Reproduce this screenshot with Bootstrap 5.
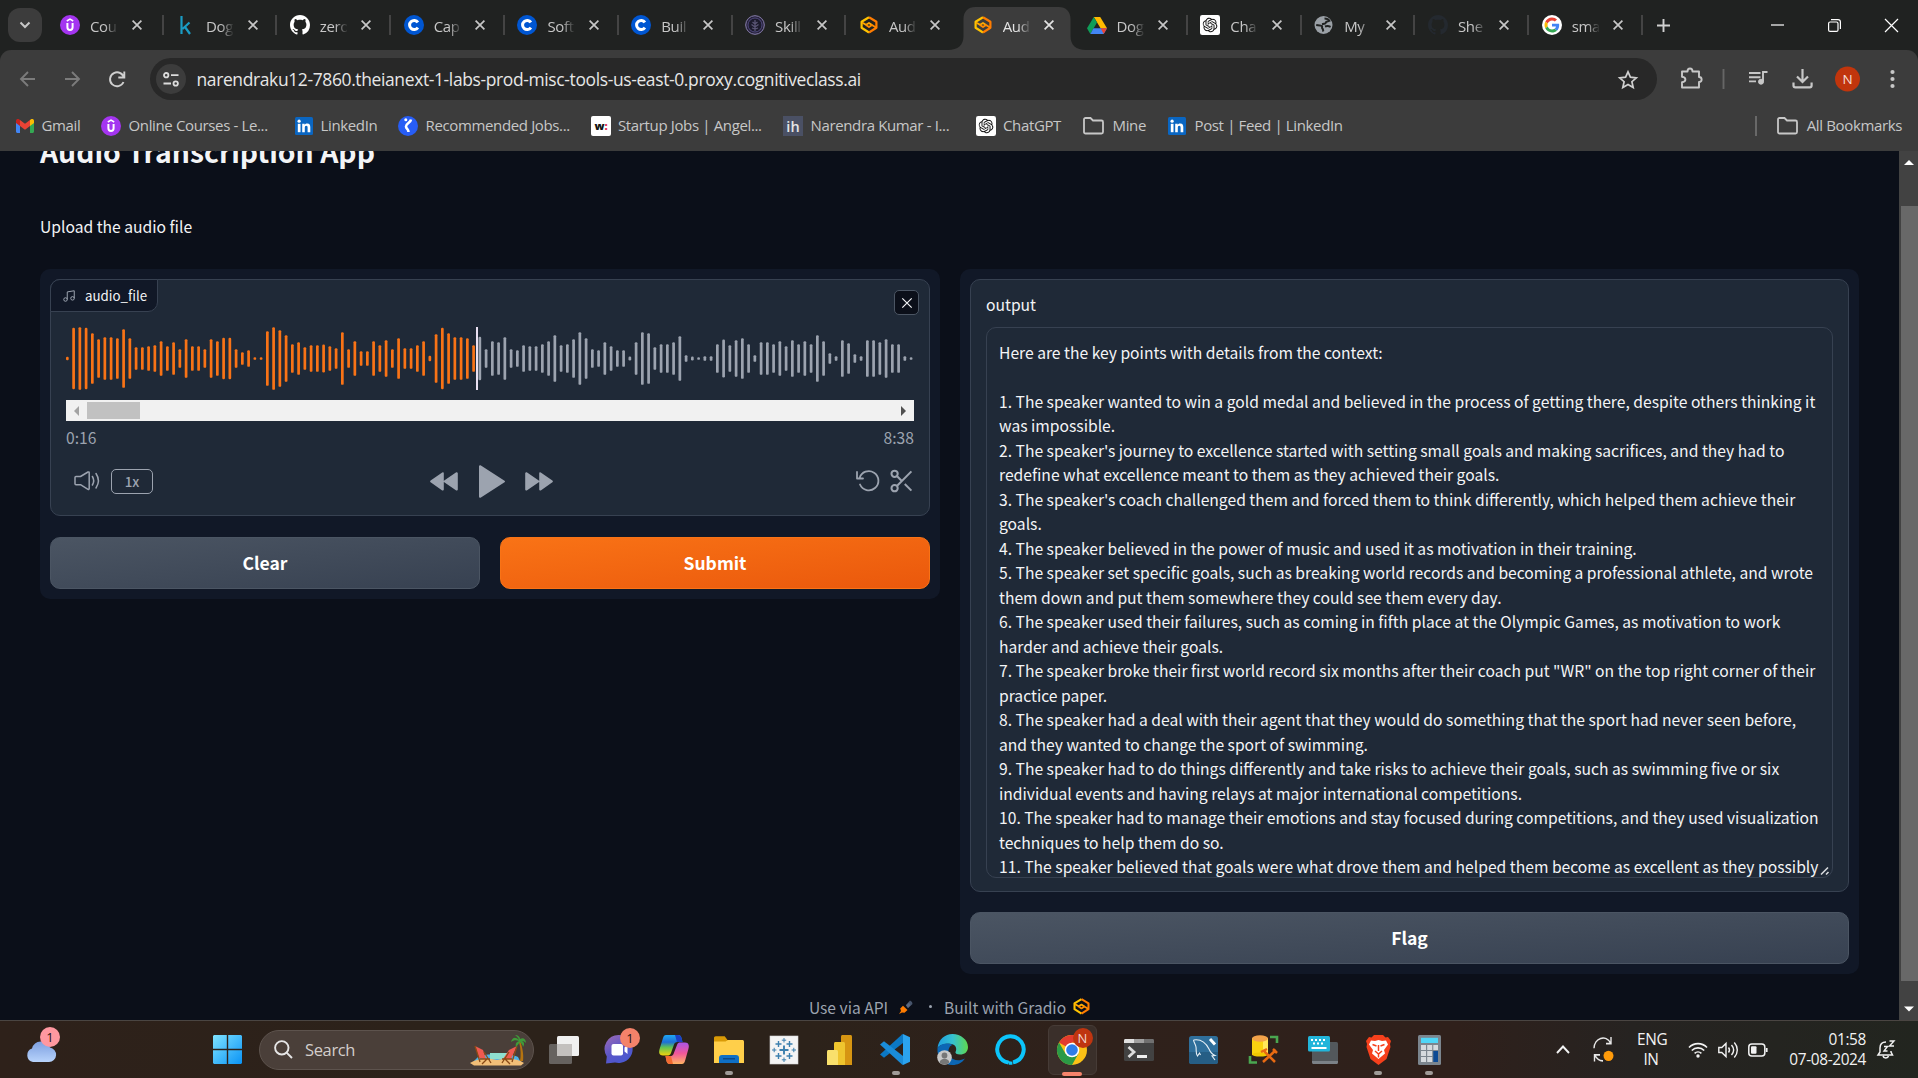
<!DOCTYPE html>
<html lang="en">
<head>
<meta charset="utf-8">
<title>Audio Transcription App</title>
<link href="https://cdn.jsdelivr.net/npm/bootstrap@5.3.0/dist/css/bootstrap.min.css" rel="stylesheet">
<style>
  html, body { height: 100%; }
  body { background: #0b0f19; overflow: hidden; font-family: "Open Sans", "Noto Sans", sans-serif; font-size: 15px; letter-spacing: -.024em; line-height: 20px; }
  svg { display: block; flex: none; overflow: visible; }
  .screen { width: 1918px; height: 1078px; }

  /* tab strip */
  .tabstrip { height: 50px; background: #202221; color: #c7c7c7; padding-left: 8px; }
  .tab-search { width: 34px; height: 34px; border-radius: 12px; background: #3c3c3c; margin: 8px 5.5px 0 0; }
  .btab { width: 113.82px; height: 50px; padding: 0 0 0 12.5px; position: relative; }
  .tab-search + .btab { width: 116px; }
  .btab .cap { width: 27px; margin-left: 10px; overflow: hidden; white-space: nowrap; padding-top: 1px;
    -webkit-mask-image: linear-gradient(90deg, #000 55%, transparent 104%); mask-image: linear-gradient(90deg, #000 55%, transparent 104%); }
  .btab .tx { margin-left: 14.5px; }
  .btab::after { content: ""; position: absolute; right: 0; top: 15px; width: 2px; height: 20px; background: #444; }
  .btab.nosep::after, .btab.current::after { display: none; }
  .btab.current { color: #e3e3e3; isolation: isolate; }
  .btab.current .shape { position: absolute; left: -12.5px; top: 7px; z-index: -1; }
  .winbtn { width: 57px; }

  /* toolbar */
  .chrome-body { background: #3c3c3c; border-radius: 11px 11px 0 0; height: 101px; color: #c7c7c7; }
  .under-tabs { background: #202221; }
  .toolbar { height: 58px; }
  .omni { height: 42px; width: 1507px; border-radius: 21px; background: #282828; padding: 0 19px 0 6px; }
  .siteinfo { width: 30px; height: 30px; border-radius: 50%; background: #3c3c3c; }
  .url { font-size: 17.45px; color: #e6e6e6; margin-left: 10.5px; }
  .bookmarks { height: 35px; padding: 0 16px; white-space: nowrap; }
  .bm { display: flex; align-items: center; width: 192.5px; }
  .bm span { margin: -2px 0 0 7.5px; }
  .bm:nth-child(1) { width: 85px; }
  .bm:nth-child(2) { width: 194px; }
  .bm:nth-child(3) { width: 103px; }
  .bm:nth-child(7) { width: 107px; }
  .bm:nth-child(8) { width: 85px; }
  .bm:nth-child(n+9) { width: auto; }

  /* page */
  .viewport { height: 869px; overflow: hidden; background: #0b0f19; font-family: "Noto Sans CJK SC", "Open Sans", sans-serif; font-size: 15.67px; letter-spacing: 0; color: #f3f4f6; }
  .page { padding: 0 40px; }
  .page h1 { font-size: 28.35px; line-height: 36px; font-weight: 700; margin: -18px 0 0; color: #f3f4f6; }
  .intro { margin-top: 46px; line-height: 24px; }
  .columns { gap: 20px; margin-top: 30px; }
  .panel { background: #111827; border-radius: 10px; padding: 10px; flex: 1 1 0; }
  .block { background: #1f2937; border: 1px solid #374151; border-radius: 10px; position: relative; }
  .audio { height: 237px; padding: 47px 15px 0; }
  .lbl { position: absolute; left: -1px; top: -1px; width: 108px; height: 33px; border: 1px solid #374151; border-radius: 10px 0 10px 0; background: #111827; font-size: 13.3px; line-height: 30px; padding-left: 11px; }
  .xbtn { position: absolute; right: 10px; top: 10px; width: 25px; height: 25px; border: 1px solid #4b5563; border-radius: 5px; background: #0b0f19; }
  .hscroll { height: 21px; background: #f1f1f1; margin-top: 10px; padding: 0 8px; }
  .hthumb { width: 53px; height: 17px; background: #c1c1c1; margin-left: 8px; }
  .times { color: #9ca3af; line-height: 24px; margin-top: 5px; }
  .controls { color: #9ca3af; height: 34px; margin-top: 14px; }
  .speed { width: 42px; height: 25px; border: 1px solid #9ca3af; border-radius: 5px; font-size: 13.4px; font-weight: 500; line-height: 23px; margin-left: 12px; }
  .side { flex: 1 1 0; }
  .gbtn { height: 52px; border-radius: 10px; font-size: 17.54px; font-weight: 700; color: #fff; border: 1px solid #4b5563; background: linear-gradient(to bottom right, #4b5563, #374151); padding: 0; line-height: 50px; flex: 1 1 0; }
  .gbtn.go { border-color: #f97316; background: linear-gradient(to bottom right, #f97316, #ea580c); }
  .out { height: 613px; padding: 13px 15px 0; }
  .outbox { height: 551px; border: 1px solid #374151; border-radius: 10px; margin-top: 10px; padding: 12.5px 0 0 12px; line-height: 24.5px; white-space: pre; overflow: hidden; position: relative; }
  .grip { position: absolute; right: 2px; bottom: 2px; }
  .foot { color: #9ca3af; line-height: 24px; margin-top: 20.5px; font-size: 15.6px; }
  .dot { width: 3px; height: 3px; border-radius: 50%; background: #9ca3af; margin: 0 12px 0 16px; }
  .vscroll { width: 19px; background: #424242; }
  .vthumb { width: 17px; height: 775px; background: #686868; margin-left: 2px; }

  /* taskbar */
  .taskbar { height: 58px; border-top: 1px solid #4a4542; background: linear-gradient(90deg, #2e211a 0, #2c221a 22%, #2c221a 42%, #2f211b 56%, #2f201b 76%, #262321 85%, #22251f 100%); color: #f2f2f2; }
  .wsearch { width: 275px; height: 40px; border-radius: 20px; background: #4a3f39; border: 1px solid #5d534d; font-size: 16.5px; color: #d3cecb; padding: 0 8px 0 14px; }
  .apps > div { width: 32px; margin-left: 23px; position: relative; height: 57px; display: flex; align-items: center; justify-content: center; }
  .apps > div:first-child { margin-left: 14px; }
  .apps > div:nth-child(7) { margin-left: 24.5px; }
  .apps > div:nth-child(8) { margin-left: 24.5px; }
  .apps > div:nth-child(9) { margin-left: 26px; }
  .apps > div:nth-child(10) { margin-left: 29.500px; }
  .apps > div:nth-child(11) { margin-left: 35px; }
  .apps > div:nth-child(12) { margin-left: 33px; }
  .apps > div:nth-child(13) { margin-left: 28.5px; }
  .apps > div:nth-child(14) { margin-left: 26.5px; }
  .apps > div:nth-child(15) { margin-left: 23.5px; }
  .apps > div:nth-child(16) { margin-left: 19px; }
  .apps .open::after { content: ""; position: absolute; left: 12px; bottom: 3px; width: 8px; height: 4px; border-radius: 2px; background: #a09b98; }
  .apps .live::before { content: ""; position: absolute; left: -8px; top: 4px; width: 49px; height: 50px; border-radius: 6px; background: #3a2f2a; border: 1px solid #463b36; }
  .apps .live::after { content: ""; position: absolute; left: 6px; bottom: 2px; width: 20px; height: 4px; border-radius: 2px; background: #f5836b; }
  .apps .live svg { position: relative; }
  .count { position: absolute; width: 20px; height: 20px; border-radius: 50%; font-size: 13px; line-height: 20px; text-align: center; color: #1c1311; letter-spacing: 0; }
  .tray { font-size: 15.4px; line-height: 20px; }
</style>
</head>
<body>
<svg width="0" height="0" class="position-absolute">
  <defs>
    <symbol id="x" viewBox="0 0 10 10"><path d="M.6.6l8.8 8.8M9.4.6L.6 9.4" stroke="currentColor" stroke-width="1.7"/></symbol>
    <symbol id="udemy" viewBox="0 0 20 20"><circle cx="10" cy="10" r="10" fill="#a435f0"/><path d="M6.8 6L10 4.1 13.200 6" fill="none" stroke="#fff" stroke-width="1.5"/><path d="M7.400 8v4.300a2.600 2.600 0 0 0 5.200 0V8" fill="none" stroke="#fff" stroke-width="2"/></symbol>
    <symbol id="github" viewBox="0 0 16 16"><path fill="currentColor" d="M8 0C3.580 0 0 3.580 0 8c0 3.540 2.290 6.530 5.470 7.590.4.070.55-.17.55-.38 0-.19-.01-.82-.01-1.490-2.010.37-2.530-.49-2.690-.94-.09-.23-.48-.94-.82-1.130-.28-.15-.68-.52-.01-.53.63-.01 1.080.58 1.230.82.72 1.210 1.870.87 2.330.66.070-.52.28-.87.51-1.070-1.780-.2-3.640-.89-3.640-3.950 0-.87.31-1.590.82-2.150-.08-.2-.36-1.020.08-2.120 0 0 .67-.21 2.200.82.64-.18 1.320-.27 2-.27.68 0 1.360.09 2 .27 1.530-1.040 2.200-.82 2.200-.82.44 1.100.16 1.920.08 2.120.51.56.82 1.270.82 2.150 0 3.070-1.870 3.750-3.650 3.950.29.25.54.73.54 1.480 0 1.070-.01 1.930-.01 2.200 0 .21.15.46.55.38A8.013 8.013 0 0 0 16 8c0-4.420-3.580-8-8-8z"/></symbol>
    <symbol id="coursera" viewBox="0 0 20 20"><circle cx="10" cy="10" r="10" fill="#0056d2"/><path d="M13.900 7.300A4.600 4.600 0 1 0 13.900 12.700" fill="none" stroke="#fff" stroke-width="3"/></symbol>
    <symbol id="gradio" viewBox="0 0 18 18"><g fill="none" stroke-width="2.200" stroke-linejoin="round"><path d="M9 1.300L1.600 5.800v6L9 16.500" stroke="#ffc400"/><path d="M9 1.300l7.400 4.500v6L9 16.500" stroke="#ff7c00"/><path d="M2 6.500l4 2.300L9 7l3 2" stroke="#ffa800" stroke-width="1.900"/><path d="M16 11.500l-4-2.500-3 2-3-2" stroke="#ff8a00" stroke-width="1.900"/></g></symbol>
    <symbol id="openai" viewBox="-3 -3 22 22"><rect x="-3" y="-3" width="22" height="22" rx="2.500" fill="#fff"/><path fill="#111" d="M14.949 6.547a3.940 3.940 0 0 0-.348-3.273 4.110 4.110 0 0 0-4.400-1.934A4.100 4.100 0 0 0 8.423.2 4.150 4.150 0 0 0 6.305.086a4.100 4.100 0 0 0-1.891.948 4.040 4.040 0 0 0-1.158 1.753 4.100 4.100 0 0 0-1.563.679A4 4 0 0 0 .554 4.720a3.990 3.990 0 0 0 .502 4.731 3.940 3.940 0 0 0 .346 3.274 4.110 4.110 0 0 0 4.402 1.933c.382.425.852.764 1.377.995.526.231 1.095.35 1.670.346 1.780.002 3.358-1.132 3.901-2.804a4.100 4.100 0 0 0 1.563-.68 4 4 0 0 0 1.140-1.253 3.990 3.990 0 0 0-.506-4.716m-6.097 8.406a3.050 3.050 0 0 1-1.945-.694l.096-.054 3.230-1.838a.53.53 0 0 0 .265-.455v-4.490l1.366.778q.020.011.025.035v3.722c-.003 1.653-1.361 2.992-3.037 2.996m-6.530-2.750a2.950 2.950 0 0 1-.36-2.010l.095.057L5.290 12.090a.53.53 0 0 0 .527 0l3.949-2.246v1.555a.05.05 0 0 1-.022.041L6.473 13.300c-1.454.826-3.311.335-4.150-1.098m-.85-6.940A3.020 3.020 0 0 1 3.070 3.949v3.785a.51.51 0 0 0 .262.451l3.930 2.237-1.366.779a.05.05 0 0 1-.048 0L2.585 9.342a2.980 2.980 0 0 1-1.113-4.094zm11.216 2.571L8.747 5.576l1.362-.776a.05.05 0 0 1 .048 0l3.265 1.860a3 3 0 0 1 1.173 1.207 2.960 2.960 0 0 1-.27 3.200 3.050 3.050 0 0 1-1.360.997V8.279a.52.52 0 0 0-.276-.445m1.360-2.015-.097-.057-3.226-1.855a.53.53 0 0 0-.53 0L6.249 6.153V4.598a.04.04 0 0 1 .019-.04L9.533 2.700a3.070 3.070 0 0 1 3.257.139c.474.325.843.778 1.066 1.303.223.526.289 1.103.191 1.664zM5.503 8.575 4.139 7.800a.05.05 0 0 1-.026-.037V4.049c0-.57.166-1.127.476-1.607s.752-.864 1.275-1.105a3.080 3.080 0 0 1 3.234.41l-.096.054-3.230 1.838a.53.53 0 0 0-.265.455zm.742-1.577 1.758-1 1.762 1v2l-1.755 1-1.762-1z"/></symbol>
    <symbol id="linkedin" viewBox="0 0 18 18"><rect width="18" height="18" rx="1.500" fill="#0a66c2"/><g fill="#fff"><circle cx="4.100" cy="4.200" r="1.600"/><rect x="2.800" y="6.800" width="2.700" height="8.400"/><path d="M7.200 6.800h2.500v1.200c.5-.9 1.500-1.400 2.600-1.400 2.300 0 3 1.500 3 3.700v4.900h-2.700v-4.500c0-1.100-.2-1.900-1.300-1.900s-1.500.8-1.500 1.900v4.500H7.200z"/></g></symbol>
    <symbol id="folder" viewBox="0 0 21 18"><path d="M1 2.500C1 1.700 1.700 1 2.500 1h5L10 3.500h8.500c.8 0 1.500.7 1.500 1.500v10c0 .8-.7 1.500-1.500 1.500h-16C1.700 16.500 1 15.800 1 15z" fill="none" stroke="currentColor" stroke-width="1.800"/></symbol>
    <symbol id="chev" viewBox="0 0 12 8"><path d="M1.500 1.500L6 6l4.500-4.500" fill="none" stroke="currentColor" stroke-width="2"/></symbol>
    <symbol id="ff" viewBox="0 0 28 19"><g fill="#9ca3af" stroke="#9ca3af" stroke-width="2" stroke-linejoin="round"><path d="M1.200 1.200v16.400L13.200 9.400zM15.200 1.200v16.400L26.800 9.400z"/></g></symbol>
  </defs>
</svg>

<div class="screen d-flex flex-column">
  <div class="tabstrip d-flex">
    <div class="tab-search d-flex align-items-center justify-content-center"><svg width="12" height="8"><use href="#chev"/></svg></div>
    <div class="btab d-flex align-items-center"><svg width="20" height="20"><use href="#udemy"/></svg><span class="cap">Cou</span><svg class="tx" width="10" height="10"><use href="#x"/></svg></div>
    <div class="btab d-flex align-items-center"><svg width="20" height="20" viewBox="0 0 20 20"><path d="M5.500 1v18M13.500 7.500l-7 6.500M9 12l5 7" fill="none" stroke="#1a9cc4" stroke-width="2.200"/></svg><span class="cap">Dog</span><svg class="tx" width="10" height="10"><use href="#x"/></svg></div>
    <div class="btab d-flex align-items-center"><svg width="20" height="20" class="text-white"><use href="#github"/></svg><span class="cap">zero</span><svg class="tx" width="10" height="10"><use href="#x"/></svg></div>
    <div class="btab d-flex align-items-center"><svg width="20" height="20"><use href="#coursera"/></svg><span class="cap">Cap</span><svg class="tx" width="10" height="10"><use href="#x"/></svg></div>
    <div class="btab d-flex align-items-center"><svg width="20" height="20"><use href="#coursera"/></svg><span class="cap">Soft</span><svg class="tx" width="10" height="10"><use href="#x"/></svg></div>
    <div class="btab d-flex align-items-center"><svg width="20" height="20"><use href="#coursera"/></svg><span class="cap">Buil</span><svg class="tx" width="10" height="10"><use href="#x"/></svg></div>
    <div class="btab d-flex align-items-center"><svg width="20" height="20" viewBox="0 0 20 20"><circle cx="10" cy="10" r="9.300" fill="#26223a" stroke="#8a80b0" stroke-width="1"/><circle cx="10" cy="10" r="7" fill="#1c1b2c" stroke="#5d5490" stroke-width=".8"/><path d="M10 5v11M10 12L6.500 9.500M10 12l3.500-2.500M10 9L7.500 7M10 9l2.500-2M7 13l3 1 3-1" stroke="#5a5575" stroke-width="1.300" fill="none"/></svg><span class="cap">Skill</span><svg class="tx" width="10" height="10"><use href="#x"/></svg></div>
    <div class="btab nosep d-flex align-items-center"><svg width="20" height="18"><use href="#gradio"/></svg><span class="cap">Aud</span><svg class="tx" width="10" height="10"><use href="#x"/></svg></div>
    <div class="btab current d-flex align-items-center"><svg class="shape" width="138" height="43" viewBox="0 0 138 43"><path d="M0 43c10 0 15.500-5 15.500-14V12C15.500 4.500 20 0 27.500 0h83c7.500 0 12 4.500 12 12v17c0 9 5.500 14 15.500 14z" fill="#3c3c3c"/></svg><svg width="20" height="18"><use href="#gradio"/></svg><span class="cap">Aud</span><svg class="tx" width="10" height="10"><use href="#x"/></svg></div>
    <div class="btab d-flex align-items-center"><svg width="20" height="17" viewBox="0 0 20 17"><path d="M6.800 0h6.400L20 11.300h-6.400z" fill="#ffba00"/><path d="M6.800 0L10 5.500 3.300 17 0 11.300z" fill="#0f9d58"/><path d="M6.500 11.300H20L16.700 17H3.300z" fill="#4285f4"/><path d="M13.600 11.300H20L16.700 17z" fill="#ea4335"/></svg><span class="cap">Dog</span><svg class="tx" width="10" height="10"><use href="#x"/></svg></div>
    <div class="btab d-flex align-items-center"><svg width="20" height="20"><use href="#openai"/></svg><span class="cap">Cha</span><svg class="tx" width="10" height="10"><use href="#x"/></svg></div>
    <div class="btab d-flex align-items-center"><svg width="20" height="18" viewBox="0 0 20 18"><circle cx="9.500" cy="9" r="9" fill="#9aa0a6"/><path d="M10.500 2.600c2 0 4 .8 4.800 2.200l-2.800 1c-.8.300-.6 1.500-1.500 1.800L8 8.200M2.200 9c2 .3 5 .2 5.800 1.200.6 1-.6 1.600.4 2.400 1 .6.400 1.800 1 2.800M11 10.500c2-.8 4.500-.2 5.600.3" fill="none" stroke="#202221" stroke-width="2"/></svg><span class="cap">My</span><svg class="tx" width="10" height="10"><use href="#x"/></svg></div>
    <div class="btab d-flex align-items-center"><svg width="20" height="20" color="#24292f"><use href="#github"/></svg><span class="cap">She</span><svg class="tx" width="10" height="10"><use href="#x"/></svg></div>
    <div class="btab d-flex align-items-center"><svg width="20" height="20" viewBox="-8 -8 64 64"><circle cx="24" cy="24" r="32" fill="#fff"/><path fill="#EA4335" d="M24 9.500c3.540 0 6.710 1.220 9.210 3.600l6.850-6.850C35.900 2.380 30.470 0 24 0 14.620 0 6.510 5.380 2.560 13.220l7.980 6.190C12.430 13.720 17.740 9.500 24 9.500z"/><path fill="#4285F4" d="M46.980 24.550c0-1.570-.15-3.090-.38-4.550H24v9.020h12.940c-.58 2.960-2.260 5.480-4.780 7.180l7.730 6c4.510-4.180 7.090-10.360 7.090-17.650z"/><path fill="#FBBC05" d="M10.530 28.590c-.48-1.450-.76-2.990-.76-4.590s.27-3.140.76-4.590l-7.980-6.190C.92 16.460 0 20.120 0 24c0 3.880.92 7.540 2.560 10.780l7.970-6.190z"/><path fill="#34A853" d="M24 48c6.480 0 11.930-2.130 15.890-5.810l-7.730-6c-2.150 1.450-4.920 2.300-8.160 2.300-6.260 0-11.570-4.220-13.470-9.910l-7.980 6.190C6.510 42.620 14.620 48 24 48z"/></svg><span class="cap">sma</span><svg class="tx" width="10" height="10"><use href="#x"/></svg></div>
    <div class="d-flex align-items-center" style="padding-left:14px"><svg width="13" height="13" viewBox="0 0 13 13"><path d="M6.500 0v13M0 6.500h13" stroke="#d0d0d0" stroke-width="1.900"/></svg></div>
    <div class="d-flex align-items-center ms-auto text-white" style="margin-right:-2px">
      <div class="winbtn d-flex justify-content-center"><svg width="13" height="13" viewBox="0 0 13 13"><path d="M0 6h13" stroke="currentColor" stroke-width="1.200"/></svg></div>
      <div class="winbtn d-flex justify-content-center"><svg width="13" height="13" viewBox="0 0 13 13"><rect x=".6" y="3" width="9.400" height="9.400" rx="1.500" fill="none" stroke="currentColor" stroke-width="1.200"/><path d="M3 .6h7c1.500 0 2.400 1 2.400 2.400v7" fill="none" stroke="currentColor" stroke-width="1.200"/></svg></div>
      <div class="winbtn d-flex justify-content-center"><svg width="13" height="13" viewBox="0 0 13 13"><path d="M0 0l13 13M13 0L0 13" stroke="currentColor" stroke-width="1.200"/></svg></div>
    </div>
  </div>

  <div class="under-tabs"><div class="chrome-body">
    <div class="toolbar d-flex align-items-center">
      <svg width="150" height="18" viewBox="0 0 150 18" fill="none" stroke-width="1.900"><path d="M35 9H21M28 2l-7 7 7 7M65 9h14M72 2l7 7-7 7" stroke="#7b7b7b"/><path d="M124 8.500A7 7 0 1 0 123.500 12M124.300 1.500v6h-6" stroke="#d0d0d0"/></svg>
      <div class="omni d-flex align-items-center">
        <div class="siteinfo d-flex align-items-center justify-content-center"><svg width="16" height="15" viewBox="0 0 16 15" fill="none" stroke="#dcdcdc" stroke-width="1.800"><circle cx="3.200" cy="3.200" r="2.200"/><path d="M8 3.200h7.500M.5 11.500H8"/><circle cx="12.700" cy="11.500" r="2.200"/></svg></div>
        <span class="url">narendraku12-7860.theianext-1-labs-prod-misc-tools-us-east-0.proxy.cognitiveclass.ai</span>
        <svg class="ms-auto" width="20" height="19" viewBox="0 0 20 19"><path d="M10 1.800l2.400 5.400 5.900.6-4.400 3.900 1.300 5.800L10 14.500l-5.200 3 1.300-5.800L1.700 7.800l5.900-.6z" fill="none" stroke="#d0d0d0" stroke-width="1.700"/></svg>
      </div>
      <svg width="260" height="26" viewBox="1657 66 260 26" fill="none" stroke="#c7c7c7" stroke-width="1.900"><path d="M1682 71.500h5.500c0-4 5-4 5 0h6.500v5.500c3.500 0 3.500 5 0 5v5.500h-17v-5.300c4.500-.5 4.500-5 0-5.500z" stroke-linejoin="round"/><path d="M1723.500 69v20" stroke="#666"/><path d="M1749 73h11.500M1749 77.200h11.500M1749 81.400h7"/><path d="M1767.500 72h-4.500v9.500" /><circle cx="1761" cy="81.700" r="2.500" fill="#c7c7c7" stroke-width="1"/><path d="M1802.500 69v12.500M1797 76.500l5.500 5.500 5.500-5.500M1793.500 82.500v3c0 1 .8 1.800 1.800 1.800h14.500c1 0 1.800-.8 1.800-1.800v-3" stroke-width="2.200"/><g fill="#c7c7c7" stroke="none"><circle cx="1892.500" cy="72" r="2.100"/><circle cx="1892.500" cy="79" r="2.100"/><circle cx="1892.500" cy="86" r="2.100"/></g><circle cx="1847.500" cy="79" r="12.500" fill="#c1350c" stroke="none"/><text x="1847.500" y="84" fill="#f6ddd5" stroke="none" font-size="13.500" text-anchor="middle" letter-spacing="0">N</text></svg>
    </div>
    <div class="bookmarks d-flex align-items-center">
      <div class="bm"><svg width="18" height="14" viewBox="0 0 18 14"><path d="M0 2v10.500c0 .8.700 1.500 1.500 1.500H4V5z" fill="#4285f4"/><path d="M18 2v10.500c0 .8-.7 1.500-1.500 1.500H14V5z" fill="#34a853"/><path d="M14 1v6l4-3V2c0-2-2-2.500-3.300-1.500z" fill="#fbbc04"/><path d="M4 1v6l5 3.800L14 7V1L9 4.800z" fill="#ea4335"/><path d="M4 7V1l-.7-.5C2-.5 0 0 0 2v2z" fill="#c5221f"/></svg><span>Gmail</span></div>
      <div class="bm"><svg width="20" height="20"><use href="#udemy"/></svg><span>Online Courses - Le...</span></div>
      <div class="bm"><svg width="18" height="18"><use href="#linkedin"/></svg><span>LinkedIn</span></div>
      <div class="bm"><svg width="20" height="20" viewBox="0 0 20 20"><circle cx="10" cy="10" r="10" fill="#275df5"/><circle cx="7.800" cy="3.800" r="1.500" fill="#fff"/><path d="M13 3.500c-.5 3.500-5 3.500-5 7 0 2.500 2.500 2.500 2.500 5.500" fill="none" stroke="#fff" stroke-width="2.600"/></svg><span>Recommended Jobs...</span></div>
      <div class="bm"><svg width="20" height="20" viewBox="0 0 20 20"><rect width="20" height="20" rx="2" fill="#fff"/><text x="3.500" y="13.500" font-family="Open Sans" font-weight="800" font-size="11" fill="#111" letter-spacing="0">w<tspan fill="#e2264d">:</tspan></text></svg><span>Startup Jobs | Angel...</span></div>
      <div class="bm"><svg width="20" height="20" viewBox="0 0 20 20"><rect width="20" height="20" fill="#4a5064"/><text x="10" y="16" font-family="Open Sans" font-weight="600" font-size="14.500" fill="#e6e6e6" text-anchor="middle" letter-spacing="0">ih</text></svg><span>Narendra Kumar - I...</span></div>
      <div class="bm"><svg width="20" height="20"><use href="#openai"/></svg><span>ChatGPT</span></div>
      <div class="bm"><svg width="21" height="18"><use href="#folder"/></svg><span style="margin-left:9px">Mine</span></div>
      <div class="bm"><svg width="18" height="18"><use href="#linkedin"/></svg><span style="margin-left:9px">Post | Feed | LinkedIn</span></div>
      <div class="bm ms-auto"><svg width="2" height="20"><path d="M1 0v20" stroke="#686868" stroke-width="2"/></svg><svg width="21" height="18" style="margin-left:20px"><use href="#folder"/></svg><span style="margin-left:9px">All Bookmarks</span></div>
    </div>
  </div></div>

  <div class="viewport d-flex">
    <div class="page flex-grow-1">
      <h1>Audio Transcription App</h1>
      <div class="intro">Upload the audio file</div>
      <div class="columns d-flex align-items-start">
        <div class="panel">
          <div class="block audio">
            <div class="lbl d-flex align-items-center"><svg width="14" height="14" viewBox="0 0 24 24" fill="none" stroke="#9ca3af" stroke-width="1.700"><path d="M9 18V5l12-2v13"/><circle cx="6" cy="18" r="3"/><circle cx="18" cy="16" r="3"/></svg><span style="margin-left:9px">audio_file</span></div>
            <div class="xbtn d-flex align-items-center justify-content-center"><svg width="10" height="10" viewBox="0 0 10 10"><path d="M.3.3l9.400 9.400M9.700.3L.3 9.700" stroke="#f3f4f6" stroke-width="1.200"/></svg></div>
            <svg id="wave" width="848" height="63" viewBox="0 0 848 63"></svg>
            <div class="hscroll d-flex align-items-center"><svg width="5" height="10" viewBox="0 0 5 10"><path d="M5 0v10L0 5z" fill="#a3a3a3"/></svg><div class="hthumb"></div><svg class="ms-auto" width="5" height="10" viewBox="0 0 5 10"><path d="M0 0v10l5-5z" fill="#505050"/></svg></div>
            <div class="times d-flex justify-content-between"><span>0:16</span><span>8:38</span></div>
            <div class="controls d-flex align-items-center">
              <div class="side d-flex align-items-center" style="padding-left:8px">
                <svg width="25" height="20" viewBox="0 0 25 20" fill="none" stroke="#9ca3af" stroke-width="1.500" stroke-linecap="round" stroke-linejoin="round"><path d="M1 6.500c0-.6.400-1 1-1h4.500L14 1c.7-.3 1.200 0 1.200.6v16c0 .7-.5 1-1.200.7l-7.500-4.600H2c-.6 0-1-.4-1-1zM18.400 5.500c1.600 2.600 1.600 5.800 0 8.500M22 2.500c3 4.500 3 10 0 14.500"/></svg>
                <div class="speed text-center">1x</div>
              </div>
              <svg width="28" height="19" style="transform:scaleX(-1)"><use href="#ff"/></svg>
              <svg width="26" height="33" viewBox="0 0 26 33" style="margin:0 20px 0 21px"><path d="M1 1.200v30.600L25 16.500z" fill="#9ca3af" stroke="#9ca3af" stroke-width="2" stroke-linejoin="round"/></svg>
              <svg width="28" height="19"><use href="#ff"/></svg>
              <div class="side d-flex align-items-center justify-content-end" style="margin-left:3px;padding-right:2px">
                <svg width="24" height="22" viewBox="0 0 24 22" fill="none" stroke="#9ca3af" stroke-width="1.800" stroke-linecap="round" stroke-linejoin="round"><path d="M1 2v6.500h6M3.600 8A9.600 9.600 0 1 1 4 14.500"/></svg>
                <svg width="21" height="22" viewBox="3 3 17.500 18" style="margin-left:11px" fill="none" stroke="#9ca3af" stroke-width="1.700"><circle cx="6" cy="6" r="2.600"/><circle cx="6" cy="18" r="2.600"/><path d="M20 4L8.120 15.880M14.470 14.480L20 20M8.120 8.120L12 12"/></svg>
              </div>
            </div>
          </div>
          <div class="d-flex" style="gap:20px;margin-top:21px"><button class="btn gbtn">Clear</button><button class="btn gbtn go">Submit</button></div>
        </div>

        <div class="panel">
          <div class="block out">
            <div style="line-height:24px">output</div>
            <div class="outbox">Here are the key points with details from the context:

1. The speaker wanted to win a gold medal and believed in the process of getting there, despite others thinking it
was impossible.
2. The speaker's journey to excellence started with setting small goals and making sacrifices, and they had to
redefine what excellence meant to them as they achieved their goals.
3. The speaker's coach challenged them and forced them to think differently, which helped them achieve their
goals.
4. The speaker believed in the power of music and used it as motivation in their training.
5. The speaker set specific goals, such as breaking world records and becoming a professional athlete, and wrote
them down and put them somewhere they could see them every day.
6. The speaker used their failures, such as coming in fifth place at the Olympic Games, as motivation to work
harder and achieve their goals.
7. The speaker broke their first world record six months after their coach put "WR" on the top right corner of their
practice paper.
8. The speaker had a deal with their agent that they would do something that the sport had never seen before,
and they wanted to change the sport of swimming.
9. The speaker had to do things differently and take risks to achieve their goals, such as swimming five or six
individual events and having relays at major international competitions.
10. The speaker had to manage their emotions and stay focused during competitions, and they used visualization
techniques to help them do so.
11. The speaker believed that goals were what drove them and helped them become as excellent as they possibly<svg class="grip" width="10" height="9" viewBox="0 0 10 9"><path d="M1 8.500L8 1.500M6 8.500l2.500-2.500" stroke="#d5d8dc" stroke-width="1.600"/></svg></div>
          </div>
          <div class="d-flex" style="margin-top:20px"><button class="btn gbtn">Flag</button></div>
        </div>
      </div>
      <div class="foot d-flex align-items-center justify-content-center">
        <span>Use via API</span>
        <svg width="15" height="16" viewBox="0 0 15 16" style="margin-left:10px"><path d="M8 6l4-4.500 2 1.500.5 2L10 9z" fill="#46536a"/><path d="M8 6.500L11 3.500l1.500 2.800L10 9z" fill="#5b6880"/><path d="M1 15l2-3-.8-2.500L5 6.800 9.500 11 6.500 13.800 4 13.500z" fill="#ff7c00"/></svg>
        <span class="dot"></span>
        <span>Built with Gradio</span>
        <svg width="17" height="17" style="margin-left:7px"><use href="#gradio"/></svg>
      </div>
    </div>
    <div class="vscroll d-flex flex-column justify-content-between">
      <svg width="19" height="55" viewBox="0 0 19 55"><path d="M5 14l5-5 5 5z" fill="#fff"/></svg>
      <div class="vthumb"></div>
      <svg width="19" height="39" viewBox="0 0 19 39"><path d="M5 25.500h10l-5 5z" fill="#fff"/></svg>
    </div>
  </div>

  <div class="taskbar d-flex align-items-center">
    <div class="position-relative" style="margin-left:26px"><svg width="30" height="24" viewBox="0 0 30 24"><defs><linearGradient id="cl" x2="0" y2="1"><stop stop-color="#7c9fe0"/><stop offset="1" stop-color="#b8d3fb"/></linearGradient></defs><path d="M7 24a7 7 0 0 1-1-13.500A9.500 9.500 0 0 1 24 9.500 7.300 7.300 0 0 1 23 24z" fill="url(#cl)"/></svg><span class="count" style="left:14px;top:-11px;background:#ff98a0">1</span></div>
    <svg width="29" height="29" viewBox="0 0 29 29" style="margin-left:157px"><defs><linearGradient id="wn" x2="1" y2="1"><stop stop-color="#7fe3ff"/><stop offset="1" stop-color="#0a93f5"/></linearGradient></defs><path d="M1 0h12.800v13.800H0V1zM15.200 0H28l1 1v12.800H15.200zM0 15.200h13.800V29H1l-1-1zM15.200 15.200H29V28l-1 1H15.200z" fill="url(#wn)"/></svg>
    <div class="wsearch d-flex align-items-center" style="margin-left:17px">
      <svg width="19" height="19" viewBox="0 0 19 19" fill="none" stroke="#e6e6e6" stroke-width="1.900"><circle cx="7.800" cy="7.800" r="6.700"/><path d="M12.600 12.600L18 18"/></svg>
      <span style="margin-left:12px;padding-top:1px">Search</span>
      <svg class="ms-auto" width="55" height="32" viewBox="0 0 55 32"><path d="M8 23c6-4 34-4 40 0l2 4H4z" fill="#4bb3e8"/><path d="M20 19h17v6H20z" fill="#8fe0d0"/><path d="M0 29c8-5 18-5 27-3 9-2 20-2 27 3l-3 2.500H4z" fill="#f2bf78"/><path d="M5 12l8 4 3 9-7-1z" fill="#ef5a50"/><path d="M47 12l-8 4-6 9h8z" fill="#ef5a50"/><path d="M5 12l5 16M10 25h10M14 18l7 11M18 24l-6 6M47 12l-5 16M42 25H32M39 18l-7 11M34 24l6 6" stroke="#8a4a16" stroke-width="1.300" fill="none"/><path d="M49 8c2 7 2 14 1 19h3c1-7-1-14-2.500-19z" fill="#b5730f"/><path d="M49 6c-4-4-7-2-8 2 3-2 5-2 8-1-3 1-4 3-3 6 2-2 3-4 4-5 1 1 3 3 3 5 2-3 1-5-1-6 2 0 3 1 4 2 0-4-3-6-6-4 0-2-2-4-5-4 1 1 3 2 4 5z" fill="#3f9a3a"/></svg>
    </div>
    <div class="apps d-flex">
      <div><svg width="30" height="28" viewBox="0 0 30 28"><rect y="8" width="23" height="20" rx="1.500" fill="#66625f"/><rect x="8" width="22" height="20" rx="1.500" fill="#f0f0f0"/><path d="M8 8h15v12H8z" fill="#c3c0be"/></svg></div>
      <div><svg width="29" height="29" viewBox="0 0 29 29"><defs><linearGradient id="tm" x2=".6" y2="1"><stop stop-color="#a06bb5"/><stop offset=".6" stop-color="#5a56c8"/><stop offset="1" stop-color="#4a58d0"/></linearGradient></defs><path d="M14 0a14 14 0 1 1-4 27.500L1 28.500l.8-7A14 14 0 0 1 14 0z" fill="url(#tm)"/><rect x="6.500" y="9" width="11.500" height="11.500" rx="2" fill="#fff"/><path d="M19.500 12.500l3-2.500v9l-3-2.500z" fill="#fff"/></svg><span class="count" style="left:17px;top:7px;background:#f4826a">1</span></div>
      <div><svg width="30" height="29" viewBox="0 0 30 29"><defs><linearGradient id="c1" x2="0" y2="1"><stop stop-color="#1fa7f2"/><stop offset=".35" stop-color="#1d6fd8"/><stop offset=".6" stop-color="#5fc454"/><stop offset="1" stop-color="#f2d40c"/></linearGradient><linearGradient id="c2" x2="0" y2="1"><stop stop-color="#a855e8"/><stop offset=".5" stop-color="#f0569a"/><stop offset="1" stop-color="#ffb463"/></linearGradient></defs><path d="M7 0h12c2 0 3 1 3.500 3l1 4h-5c-2 0-3 1-3.500 2.500L12 18c-.7 2-2 2.500-4 2.500H4C0 20.500-.4 17 .6 14L4 3C4.600 1 5.500 0 7 0z" fill="url(#c1)"/><path d="M16 0h3c2 0 3 1 3.500 3l1 4H18z" fill="#1c3fc4"/><path d="M23 29H11c-2 0-3-1-3.500-3l-1-5H11c2 0 3-.5 3.700-2.500L18 10c.7-2 1.500-2.500 3.500-2.500H26c4 0 4.400 3.500 3.400 6.500L26 26c-.6 2-1.500 3-3 3z" fill="url(#c2)"/><path d="M14 29h-3c-2 0-3-1-3.500-3l-1-5H12z" fill="#f26a30"/></svg></div>
      <div class="open"><svg width="30" height="27" viewBox="0 0 30 27"><path d="M0 2c0-1 .7-1.700 1.700-1.700h9L13.500 4H28v4H0z" fill="#d99a06"/><path d="M0 5.500h11.500L14 4h14.300c1 0 1.700.7 1.700 1.700V27H0z" fill="#ffcf4a"/><path d="M5 27v-5c0-2 1-3 3-3h14c2 0 3 1 3 3v5z" fill="#0f6fc5"/><path d="M9 22.800h12" stroke="#0a3f78" stroke-width="1.200"/></svg></div>
      <div><svg width="28" height="28" viewBox="0 0 28 28"><rect width="28" height="28" fill="#f4f4f4" stroke="#d8d8d8" stroke-width=".6"/><g fill="none" stroke="#3b7fae"><path d="M14 9.500v9M9.500 14h9" stroke-width="1.900"/><path d="M8.500 5v6M5.500 8h6M19.500 5v6M16.500 8h6M8.500 17v6M5.500 20h6M19.500 17v6M16.500 20h6" stroke-width="1.400"/><path d="M14 2v4.500M11.800 4.200h4.400M14 21.500V26M11.800 23.800h4.400M4.200 11.800v4.400M2 14h4.400M23.800 11.800v4.400M21.600 14H26" stroke-width="1"/></g></svg></div>
      <div><svg width="25" height="30" viewBox="0 0 25 30"><path d="M14 1.500C14 .6 14.600 0 15.500 0H23.500c.9 0 1.500.6 1.500 1.500V30H14z" fill="#d69512"/><path d="M7 8.500C7 7.600 7.600 7 8.500 7h8c.9 0 1.500.6 1.500 1.500V30H7z" fill="#efc52e"/><path d="M0 16.500c0-.9.600-1.500 1.500-1.500h8c.9 0 1.500.6 1.500 1.500V30H0z" fill="#f9e06c"/></svg></div>
      <div class="open"><svg width="31" height="31" viewBox="0 0 31 31"><path d="M23 0l7 3.200v24.600L23 31z" fill="#2ba3ee"/><path d="M23 0v9L4 23.800 0 20.500 22 .5z" fill="#0b78c4"/><path d="M23 31v-9L4 7.200 0 10.500 22 30.500z" fill="#1a8cd8"/></svg></div>
      <div><svg width="31" height="31" viewBox="0 0 31 31"><defs><linearGradient id="eg"><stop stop-color="#1e9fe0"/><stop offset=".5" stop-color="#35c1d0"/><stop offset="1" stop-color="#5fd84f"/></linearGradient></defs><path d="M.5 14C1.500 5.500 8 0 15.500 0 24 0 31 6 31 13c0 5-3.500 7.500-8 7.500-3.500 0-5-1.500-4.500-2.500 1.500-2.500 1-7-4-8C8 9 2.500 11 .5 14z" fill="url(#eg)"/><path d="M.5 14C4 9 12 8.500 15.500 11c-4 1-5.500 7-2.500 11.500 3 4 9 5 15 2C25 29 20.500 31 15.500 31 6 31-.5 23 .5 14z" fill="#0c67b5"/><circle cx="7.500" cy="23.500" r="7.300" fill="#c8c8c8"/><circle cx="7.500" cy="21.500" r="2.900" fill="#777"/><path d="M2.500 28.500c1-5 9-5 10 0a7 7 0 0 1-10 0z" fill="#777"/></svg></div>
      <div><svg width="31" height="31" viewBox="0 0 31 31"><path d="M13.500 28.500A13.200 13.200 0 1 1 18 28.400" fill="none" stroke="#0cc5fb" stroke-width="4"/><path d="M10 26.500c2.500.5 3.800 2 3.900 4.200h3.500v-3z" fill="#0cc5fb"/></svg></div>
      <div class="live"><svg width="30" height="30" viewBox="0 0 30 30"><circle cx="15" cy="15" r="15" fill="#fbc116"/><path d="M15 15L2 7.500A15 15 0 0 1 28 7.500H15z" fill="#e33b2e"/><path d="M2 7.500A15 15 0 0 0 15 30l6.500-11.500L8.500 18.700z" fill="#2b9a46"/><circle cx="15" cy="15" r="7.300" fill="#fff"/><circle cx="15" cy="15" r="5.800" fill="#2f7de8"/></svg><span class="count" style="left:17px;top:7px;background:#bf3510;color:#f3d6cc">N</span></div>
      <div><svg width="30" height="22" viewBox="0 0 30 22"><rect width="30" height="22" rx="1.500" fill="#424242"/><path d="M0 4V1.500C0 .6.600 0 1.500 0H10v4z" fill="#e0e0e0"/><path d="M10 0h10v4H10z" fill="#a0a0a0"/><path d="M20 0h8.500c.9 0 1.500.6 1.500 1.500V4H20z" fill="#707070"/><path d="M4.500 8l5.500 5-5.500 5" fill="none" stroke="#ddd" stroke-width="2.800"/><path d="M13 17.500h10" stroke="#eee" stroke-width="3"/></svg></div>
      <div><svg width="29" height="28" viewBox="0 0 29 28"><rect width="29" height="28" rx="2.500" fill="#2f6f9b"/><path d="M0 16h29v9.500c0 1.500-1 2.500-2.500 2.500h-24C1 28 0 27 0 25.500z" fill="#265e85"/><path d="M4.500 4c6-1 12 2 15.500 9 1.500 3.500 2.500 5 6 6.500l-3 .5 3 4M4.500 4c.5 3 2 4 2.500 7 .5 4-.5 6 1.500 9l2-3 1 2" fill="none" stroke="#e8f1f7" stroke-width="1.100"/><path d="M21 3l5 5.500" stroke="#fff" stroke-width="3"/></svg></div>
      <div><svg width="30" height="29" viewBox="0 0 30 29"><path d="M3 3h16v17H3z" fill="#f9d30f"/><path d="M14 3h5v17h-5z" fill="#ffe95a"/><ellipse cx="11" cy="19.500" rx="8" ry="2" fill="#f0c800"/><ellipse cx="11" cy="3.500" rx="8" ry="3.300" fill="#f2a24a"/><path d="M21 2h7v6M1 21v6.500h7" fill="none" stroke="#4aa650" stroke-width="2.600"/><path d="M14 27l13-12M26 27L14 15M12 17l6-3M24 14l4 4" stroke="#e86a12" stroke-width="2.500" fill="none"/></svg></div>
      <div><svg width="30" height="28" viewBox="0 0 30 28"><rect x="4" y="6" width="26" height="21.500" rx="1.500" fill="#53585c"/><path d="M4 25h26v1.500c0 .8-.7 1.500-1.500 1.500h-23C4.700 28 4 27.300 4 26.500z" fill="#7b8187"/><rect width="22" height="15.500" rx="1.500" fill="#22b5da"/><path d="M3 4h16M5 7.500h12" stroke="#fff" stroke-width="1.800" stroke-dasharray="2 2"/><path d="M3.500 12h15" stroke="#fff" stroke-width="2"/></svg></div>
      <div class="open"><svg width="25" height="30" viewBox="0 0 25 30"><path d="M8 0h9l2.500 2.500 2.500-.5 3 4-1 3 .5 3-4 12-8 6-8-6L.5 12 1 9 0 6l3-4 2.500.5z" fill="#f6401c"/><path d="M5 5.500l4 .5 3.500-1 3.500 1 4-.5 2 4-4 5.500 1 3.500-6.500 5.500L6 18.500 7 15 3 9.500z" fill="#fff"/><path d="M6.500 9.500l4 1.500M18.500 9.500l-4 1.500M12.500 10v6M9 16l3.500 3 3.500-3M12.500 19.500v3" stroke="#f6401c" stroke-width="1.500" fill="none"/></svg></div>
      <div class="open"><svg width="23" height="30" viewBox="0 0 23 30"><rect width="23" height="30" rx="1.500" fill="#7b858e"/><rect x="3" y="2.800" width="17" height="5.200" fill="#4fd6f7"/><g fill="#d5dade"><path d="M3 10h5v5H3zM9.200 10h5v5h-5zM15.300 10H20v5h-4.700zM3 16h5v5H3zM9.200 16h5v5h-5zM3 22h5v5H3zM9.200 22h5v5h-5z"/></g><rect x="15.300" y="16" width="4.700" height="11" fill="#0c4a94"/></g></svg></div>
    </div>
    <div class="tray d-flex align-items-center ms-auto">
      <svg width="14" height="9" viewBox="0 0 14 9"><path d="M1 8l6-6.500L13 8" fill="none" stroke="#f2f2f2" stroke-width="1.900"/></svg>
      <svg width="21" height="25" viewBox="0 0 21 21" preserveAspectRatio="none" style="margin-left:23px" fill="none" stroke="#e8e8e8" stroke-width="1.400"><path d="M1 9.500A9 9 0 0 1 17.500 5M18 0v5.500h-5M10 20A9 9 0 0 1 2 15.500M1.500 20.500V15H7"/><ellipse cx="15.500" cy="15.800" rx="5" ry="4.300" fill="#ff9b0a" stroke="none"/></svg>
      <div class="text-center" style="margin-left:23px;width:28px;line-height:20px;white-space:nowrap">ENG<br>IN</div>
      <svg width="20" height="18" viewBox="0 0 20 18" style="margin-left:23px" fill="none" stroke="#f2f2f2" stroke-width="1.600"><path d="M1 6.500a12.500 12.500 0 0 1 18 0M3.800 9.500a8.700 8.700 0 0 1 12.400 0M6.600 12.300a4.900 4.900 0 0 1 6.800 0"/><circle cx="10" cy="15" r="1.700" fill="#f2f2f2" stroke="none"/></svg>
      <svg width="20" height="18" viewBox="0 0 20 18" style="margin-left:10px" fill="none" stroke="#f2f2f2" stroke-width="1.400"><path d="M.8 6.500h3L8 2.500v13l-4.200-4h-3zM10.500 6.500c1.200 1.500 1.200 3.500 0 5M13.500 4c2.600 3 2.600 7 0 10M16.300 1.500c4 4.500 4 10.500 0 15"/></svg>
      <svg width="20" height="14" viewBox="0 0 20 14" style="margin-left:10px"><rect x=".8" y="1" width="16" height="12" rx="3" fill="none" stroke="#f2f2f2" stroke-width="1.500"/><rect x="3" y="3.200" width="5.500" height="7.600" rx="1" fill="#f2f2f2"/><path d="M18.700 5v4" stroke="#f2f2f2" stroke-width="1.800"/></svg>
      <div class="text-end" style="margin-left:19px;width:79px;white-space:nowrap">01:58<br>07-08-2024</div>
      <svg width="18" height="19" viewBox="0 0 18 19" style="margin:0 23px 0 11px" fill="none" stroke="#f2f2f2" stroke-width="1.500"><path d="M9 2C5 2 3 4.500 3 8v4l-2 3h14.500l-1.500-3v-1M6 16c.5 2.500 5 2.500 5.500 0"/><path d="M7 6.500h3.500L7 11h3.500M12.500 1H17l-4.500 5H17" stroke-width="1.400"/></svg>
    </div>
  </div>
</div>

<script src="https://cdn.jsdelivr.net/npm/bootstrap@5.3.0/dist/js/bootstrap.bundle.min.js"></script>
<script>
  // half-heights of the waveform bars, in thirds of a pixel
  const peaks = [5,92,94,92,76,58,64,64,61,88,61,34,34,37,40,52,37,49,28,58,37,37,28,58,52,62,62,28,19,25,4,4,82,94,85,70,43,49,34,40,40,42,37,31,79,28,52,22,22,52,40,55,28,61,31,31,40,52,8,73,92,76,64,64,61,40,
    65,28,52,49,64,28,25,40,37,37,43,52,70,40,43,58,79,61,28,25,49,37,25,25,6,49,79,76,34,43,43,49,67,10,6,4,7,7,43,57,40,55,61,43,10,49,49,43,52,37,55,43,52,43,70,52,16,7,55,46,13,7,55,55,49,58,43,43,7,4];
  const played = 66;
  let bars = '';
  peaks.forEach((p, i) => {
    const h = p / 3;
    bars += `<rect x="${(i * 6.25).toFixed(2)}" y="${(31.5 - h).toFixed(2)}" width="2.700" height="${(2 * h).toFixed(2)}" rx="1.200" fill="${i < played ? '#f97316' : '#9ca3af'}"/>`;
  });
  document.getElementById('wave').innerHTML = bars + '<rect x="410" y="0" width="2" height="63" fill="#e9e0f2"/>';
</script>
</body>
</html>
